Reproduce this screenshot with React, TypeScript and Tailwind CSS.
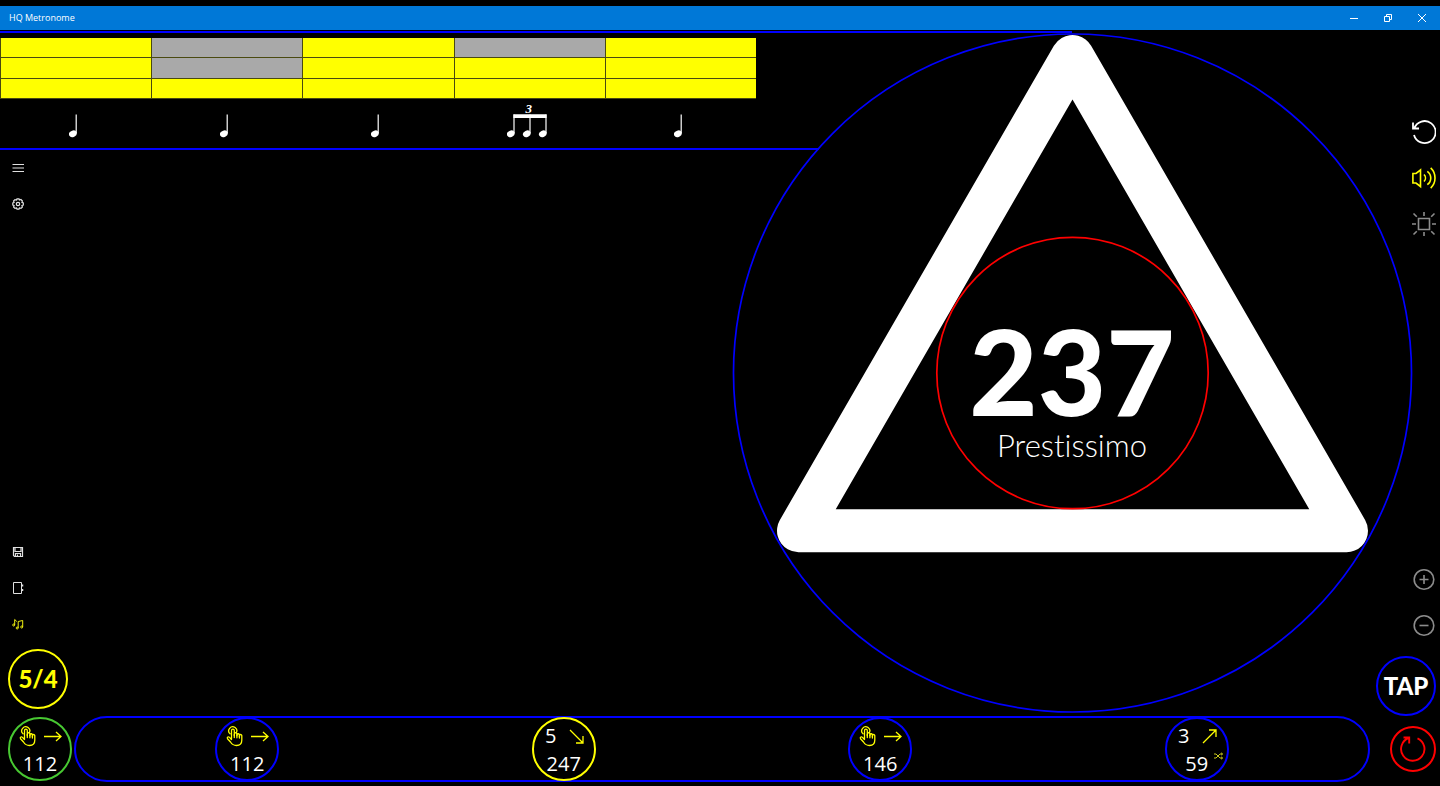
import React from 'react';

type Direction = 'right' | 'down' | 'up';

interface Step {
  id: number;
  bpm: number;
  bars?: number;
  direction: Direction;
  shuffle?: boolean;
  ring: string;
}

const LEVELS = [
  [true, false, true, false, true],
  [true, false, true, true, true],
  [true, true, true, true, true],
];

const RHYTHM = ['quarter', 'quarter', 'quarter', 'triplet', 'quarter'];

const START: Step = { id: 0, bpm: 112, direction: 'right', ring: 'border-[#48c832]' };

const STEPS: Step[] = [
  { id: 1, bpm: 112, direction: 'right', ring: 'border-[#0000ff]' },
  { id: 2, bpm: 247, bars: 5, direction: 'down', ring: 'border-[#ffff00]' },
  { id: 3, bpm: 146, direction: 'right', ring: 'border-[#0000ff]' },
  { id: 4, bpm: 59, bars: 3, direction: 'up', shuffle: true, ring: 'border-[#0000ff]' },
];

const ARROWS: Record<Direction, string> = {
  right: 'M1 10.500H18M13 6L18 10.500L13 15',
  down: 'M3 4L16 17M16 10V17H9',
  up: 'M3 17L16 4M9 4H16V11',
};

const QuarterNote = () => (
  <svg width="8" height="24" viewBox="0 0 8 24" fill="#fff">
    <ellipse cx="3.9" cy="19.8" rx="4" ry="3.2" transform="rotate(-25 3.900 19.800)" />
    <path d="M6.600 0.500H7.800V19H6.600Z" />
  </svg>
);

const Triplet = () => (
  <>
    <span className="h-[10px] pl-1 font-['Liberation_Serif',serif] text-[13px] leading-[10px] font-bold italic text-white">3</span>
    <svg width="40" height="24" viewBox="0 0 40 24" fill="#fff">
      {[0, 16, 32].map(x => (
        <g key={x}>
          <ellipse cx={x + 3.8} cy="19.8" rx="4" ry="3.2" transform={`rotate(-25 ${x + 3.8} 19.8)`} />
          <path d={`M${x + 6.4} 0.5H${x + 7.6}V19H${x + 6.4}Z`} />
        </g>
      ))}
      <path d="M6.400 0.300H39.600V4H6.400Z" />
    </svg>
  </>
);

const TapFinger = () => (
  <svg width="18" height="22" viewBox="-1 0 18 22" fill="none" stroke="#ffff00" strokeWidth="1.3" strokeLinejoin="round" strokeLinecap="round">
    <path d="M5.500 14.500V5.500a1.400 1.400 0 0 1 2.800 0v5V9a1.300 1.300 0 0 1 2.600 0v1.700V9.700a1.300 1.300 0 0 1 2.500 0v1.700v-.7a1.200 1.200 0 0 1 2.400 0V15c0 3.500-2 5.500-5.300 5.500c-3 0-4.600-1.200-6-3.500L1.500 13.700c-.8-1.500.9-2.500 2-1.300L5.500 14.500" />
    <path d="M4.100 8.800a4 4 0 1 1 6-.8" />
    <path d="M8.300 9.500V12.500M10.900 10V12.800M13.400 11V13" />
  </svg>
);

const StepButton: React.FC<{ step: Step }> = ({ step }) => (
  <button
    aria-label={`Tempo step ${step.bpm}`}
    className={`relative flex size-16 shrink-0 flex-col items-center rounded-full border-2 pt-1 ${step.ring}`}
  >
    <span className="grid h-[26px] w-[52px] grid-cols-2 place-items-center text-xl leading-[26px] text-white">
      {step.bars ? <span>{step.bars}</span> : <TapFinger />}
      <svg width="20" height="20" viewBox="0 0 20 20" fill="none" stroke="#ffff00" strokeWidth="1.3">
        <path d={ARROWS[step.direction]} />
      </svg>
    </span>
    <span className="text-xl leading-[30px] text-white">{step.bpm}</span>
    {step.shuffle && (
      <svg className="absolute top-[33px] right-1" width="9" height="8" viewBox="0 0 9 8" fill="none" stroke="#e0e020" strokeWidth="0.9">
        <path d="M0 2H2L6 6H8.500M0 6H2L6 2H8.500M7.200 .8L8.500 2L7.200 3.200M7.200 4.800L8.500 6L7.200 7.200" />
      </svg>
    )}
  </button>
);

const WindowBar = () => (
  <header className="flex h-6 items-center justify-between bg-[#0078d7] pr-px pl-[9px] text-white">
    <h1 className="text-[9px] leading-3">HQ Metronome</h1>
    <div className="flex">
      <button aria-label="Minimize" className="flex h-6 w-[34px] items-center justify-center">
        <svg width="10" height="10" viewBox="0 0 10 10" stroke="currentColor"><path d="M1 5.500H9" /></svg>
      </button>
      <button aria-label="Restore" className="flex h-6 w-[34px] items-center justify-center">
        <svg width="10" height="10" viewBox="0 0 10 10" fill="none" stroke="currentColor">
          <path d="M1.500 3.500H6.500V8.500H1.500ZM3.500 3.500V1.500H8.500V6.500H6.500" />
        </svg>
      </button>
      <button aria-label="Close" className="flex h-6 w-[34px] items-center justify-center">
        <svg width="10" height="10" viewBox="0 0 10 10" stroke="currentColor"><path d="M1 1L9 9M9 1L1 9" /></svg>
      </button>
    </div>
  </header>
);

const RhythmPanel = () => (
  <section className="mt-px border-y-2 border-[#0000ff] pt-[5px]">
    <div className="grid grid-rows-[20px_21px_20px]">
      {LEVELS.map((row, r) => (
        <div key={r} className="grid grid-cols-5">
          {row.map((on, c) => (
            <button
              key={c}
              aria-label={`Beat ${c + 1}, level ${3 - r}`}
              aria-pressed={on}
              className={`border-b border-l border-[#4a4a10] ${on ? 'bg-[#ffff00]' : 'bg-[#a9a9a9]'}`}
            />
          ))}
        </div>
      ))}
    </div>
    <div className="grid h-[49px] grid-cols-5">
      {RHYTHM.map((kind, i) => (
        <button key={i} aria-label={`Beat ${i + 1} ${kind}`} className="flex flex-col items-center justify-end pr-[5px] pb-[10px]">
          {kind === 'triplet' ? <Triplet /> : <QuarterNote />}
        </button>
      ))}
    </div>
  </section>
);

const sideButton = 'flex h-9 w-9 items-center justify-center';

const LeftPanel = () => (
  <div className="flex min-w-0 flex-1 flex-col">
    <RhythmPanel />
    <nav className="flex flex-col text-[#e0e0e0]">
      <button aria-label="Menu" className={sideButton}>
        <svg width="12" height="12" viewBox="0 0 12 12" stroke="currentColor"><path d="M0.500 2.500H12M0.500 6H12M0.500 9.500H12" /></svg>
      </button>
      <button aria-label="Settings" className={sideButton}>
        <svg width="12" height="12" viewBox="0 0 12 12" fill="none" stroke="currentColor" strokeWidth="1.200">
          <path d="M5 .8H7L7.400 2L8.900 1.500L10.400 3L9.900 4.400L11.300 5V7L9.900 7.500L10.400 9L9 10.400L7.500 9.900L7 11.200H5L4.500 9.900L3 10.400L1.600 9L2.100 7.500L.8 7V5L2.100 4.500L1.600 3L3 1.600L4.600 2Z" />
          <circle cx="6" cy="6" r="1.700" />
        </svg>
      </button>
    </nav>
    <nav className="mt-auto flex flex-col text-[#e0e0e0]">
      <button aria-label="Save" className={sideButton}>
        <svg width="12" height="12" viewBox="0 0 12 12" fill="none" stroke="currentColor" strokeWidth="1.200">
          <path d="M1.500 1.500H10.500V10.500H2.500L1.500 9.500ZM3 1.500V5.500H9V1.500M3.500 10.500V7.500H8.500V10.500M5.500 8.500V10.500" />
        </svg>
      </button>
      <button aria-label="Library" className={sideButton}>
        <svg width="12" height="12" viewBox="0 0 12 12" fill="none" stroke="currentColor">
          <path d="M9.500 2.500V.5H1.500V11.500H9.500V9.500" />
          <path d="M9.500 2V10" />
          <path d="M10.500 2.500V4.500M10.500 7V9" strokeWidth="1.500" />
        </svg>
      </button>
      <button aria-label="Sounds" className={sideButton}>
        <svg width="12" height="12" viewBox="0 0 12 12" fill="none" stroke="#f0f010" strokeWidth="1">
          <path d="M2.700 7V1.500L4.800 3.500M6.200 10V3.500L10.700 2.500V9" />
          <circle cx="1.700" cy="7" r="1" />
          <circle cx="5.200" cy="10" r="1" />
          <circle cx="9.700" cy="9" r="1" />
        </svg>
      </button>
    </nav>
    <button className="my-[7px] ml-2 size-[60px] rounded-full border-2 border-[#ffff00] font-['Lato',sans-serif] text-2xl font-black text-[#ffff00]">
      5/4
    </button>
  </div>
);

const Dial = () => (
  <section className="mt-[3px] -ml-6 grid w-[680px] shrink-0 self-start">
    <svg className="pointer-events-none col-start-1 row-start-1 aspect-square w-full overflow-visible" viewBox="0 0 680 680" fill="none">
      <path d="M24 -1H340M24 116H87" stroke="#0000ff" strokeWidth="2" />
      <path d="M340.500 23.500L66.500 497.700H614.500Z" stroke="#fff" strokeWidth="43" strokeLinejoin="round" />
      <circle cx="340.500" cy="340" r="339" stroke="#0000ff" strokeWidth="1.700" />
      <circle cx="340.500" cy="340" r="135.700" stroke="#ff0000" strokeWidth="1.700" />
    </svg>
    <div className="col-start-1 row-start-1 flex flex-col items-center self-center pt-9 font-['Lato',sans-serif] text-white [font-variant-ligatures:none]">
      <output className="text-[118px] leading-[108px] font-black">237</output>
      <p className="text-[31px] leading-10 font-light">Prestissimo</p>
    </div>
  </section>
);

const toolButton = 'flex h-[46px] w-8 items-center justify-end pr-1';

const RightTools = () => (
  <aside className="-ml-9 flex w-16 flex-col items-end">
    <button aria-label="Undo" className={`mt-[79px] ${toolButton}`}>
      <svg width="24" height="26" viewBox="0 0 24 26" fill="none" stroke="#fff" strokeWidth="1.800">
        <path d="M2.200 9.500A11 11 0 1 1 2 16M1 3.500V9.500H7" />
      </svg>
    </button>
    <button aria-label="Sound" className={toolButton}>
      <svg width="24" height="24" viewBox="0 0 24 24" fill="none" stroke="#ffff00" strokeWidth="1.600">
        <path d="M.9 7.500H4L8.500 4V20.500L4 17H.9Z" />
        <path d="M12 8.500A5 5 0 0 1 12 15.500M15.300 5.300A8.200 8.200 0 0 1 15.300 18.700M18.700 1.900A14 14 0 0 1 18.700 22.100" />
      </svg>
    </button>
    <button aria-label="Flash" className={toolButton}>
      <svg width="24" height="24" viewBox="0 0 24 24" fill="none" stroke="#8c8c8c" strokeWidth="1.600">
        <path d="M6.500 6.500H17.500V17.500H6.500ZM12 0V4M12 20V24M0 12H4M20 12H24M1.500 1.500L4.800 4.800M22.500 1.500L19.200 4.800M1.500 22.500L4.800 19.200M22.500 22.500L19.200 19.200" />
      </svg>
    </button>
    <button aria-label="Increase tempo" className={`mt-auto ${toolButton}`}>
      <svg width="24" height="24" viewBox="0 0 24 24" fill="none" stroke="#8c8c8c" strokeWidth="1.600">
        <circle cx="12" cy="12.500" r="9.800" /><path d="M7.500 12.500H16.500M12 8V17" />
      </svg>
    </button>
    <button aria-label="Decrease tempo" className={toolButton}>
      <svg width="24" height="24" viewBox="0 0 24 24" fill="none" stroke="#8c8c8c" strokeWidth="1.600">
        <circle cx="12" cy="12.500" r="9.800" /><path d="M7.500 12.500H16.500" />
      </svg>
    </button>
    <button className="mt-2 mr-1 size-[60px] rounded-full border-2 border-[#0000ff] font-['Lato',sans-serif] text-2xl font-black text-white">
      TAP
    </button>
  </aside>
);

const App: React.FC = () => {
  return (
    <div className="flex min-h-screen flex-col bg-black pt-1.5 pb-1 font-['Open_Sans',sans-serif]">
      <WindowBar />
      <main className="flex flex-1">
        <LeftPanel />
        <Dial />
        <RightTools />
      </main>
      <footer className="flex items-center pr-1 pl-2">
        <StepButton step={START} />
        <div className="mr-5 ml-0.5 grid h-[66px] flex-1 grid-cols-4 content-center justify-items-center rounded-full border-2 border-[#0000ff] px-[13px]">
          {STEPS.map(step => (
            <StepButton key={step.id} step={step} />
          ))}
        </div>
        <button aria-label="Restart" className="flex size-[46px] items-center justify-center rounded-full border-2 border-[#ff0000]">
          <svg width="28" height="28" viewBox="0 0 28 28" fill="none" stroke="#ff0000" strokeWidth="1.900">
            <path d="M18.500 3.300A11.700 11.700 0 1 1 9.800 3M4.500 2.500H10.200V8.500" />
          </svg>
        </button>
      </footer>
    </div>
  );
};

export default App;
